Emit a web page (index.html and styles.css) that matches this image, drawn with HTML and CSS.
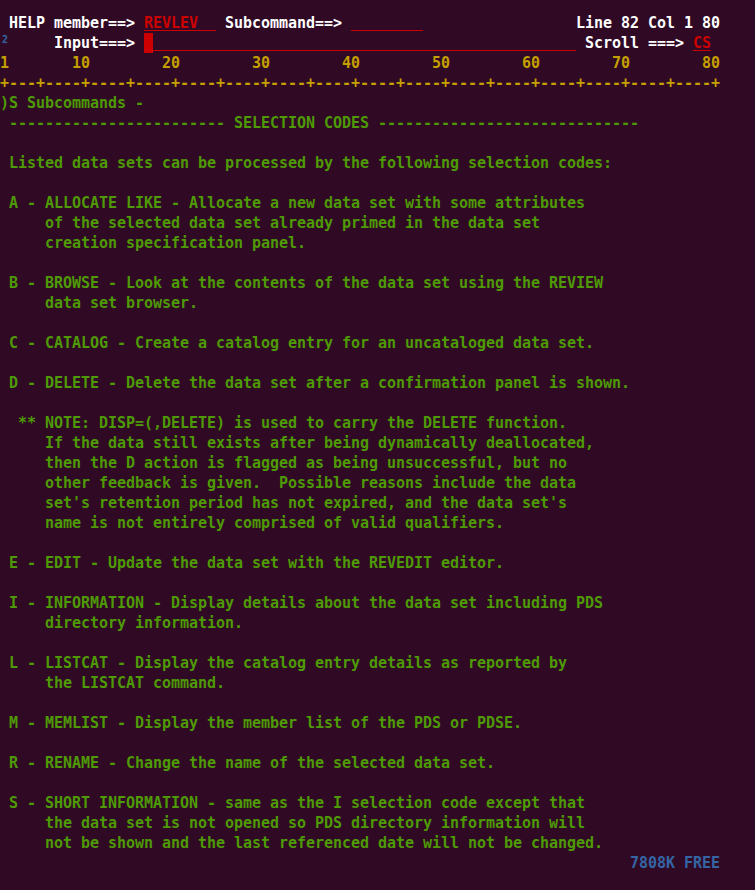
FILE: index.html
```html
<!DOCTYPE html>
<html>
<head>
<meta charset="utf-8">
<title>REVIEW HELP</title>
<link rel="stylesheet" href="styles.css">
</head>
<body>
<main class="screen">
<div class="row"> <span class="hi">HELP member==&gt; </span><span class="field red">REVLEV  </span><span class="hi"> Subcommand==&gt; </span><span class="field red">        </span><span class="hi">                 Line 82 Col 1 80</span></div>
<div class="row"><span class="tag">2</span><span class="hi">     Input===&gt; </span><span class="cursor"> </span><span class="field red">                                               </span><span class="hi"> Scroll ===&gt; </span><span class="field red">CS</span></div>
<div class="row yellow">1       10        20        30        40        50        60        70        80</div>
<div class="row yellow">+---+----+----+----+----+----+----+----+----+----+----+----+----+----+----+----+</div>
<div class="row green">)S Subcommands -</div>
<div class="row green"> ------------------------ SELECTION CODES -----------------------------</div>
<div class="row green"> </div>
<div class="row green"> Listed data sets can be processed by the following selection codes:</div>
<div class="row green"> </div>
<div class="row green"> A - ALLOCATE LIKE - Allocate a new data set with some attributes</div>
<div class="row green">     of the selected data set already primed in the data set</div>
<div class="row green">     creation specification panel.</div>
<div class="row green"> </div>
<div class="row green"> B - BROWSE - Look at the contents of the data set using the REVIEW</div>
<div class="row green">     data set browser.</div>
<div class="row green"> </div>
<div class="row green"> C - CATALOG - Create a catalog entry for an uncataloged data set.</div>
<div class="row green"> </div>
<div class="row green"> D - DELETE - Delete the data set after a confirmation panel is shown.</div>
<div class="row green"> </div>
<div class="row green">  ** NOTE: DISP=(,DELETE) is used to carry the DELETE function.</div>
<div class="row green">     If the data still exists after being dynamically deallocated,</div>
<div class="row green">     then the D action is flagged as being unsuccessful, but no</div>
<div class="row green">     other feedback is given.  Possible reasons include the data</div>
<div class="row green">     set's retention period has not expired, and the data set's</div>
<div class="row green">     name is not entirely comprised of valid qualifiers.</div>
<div class="row green"> </div>
<div class="row green"> E - EDIT - Update the data set with the REVEDIT editor.</div>
<div class="row green"> </div>
<div class="row green"> I - INFORMATION - Display details about the data set including PDS</div>
<div class="row green">     directory information.</div>
<div class="row green"> </div>
<div class="row green"> L - LISTCAT - Display the catalog entry details as reported by</div>
<div class="row green">     the LISTCAT command.</div>
<div class="row green"> </div>
<div class="row green"> M - MEMLIST - Display the member list of the PDS or PDSE.</div>
<div class="row green"> </div>
<div class="row green"> R - RENAME - Change the name of the selected data set.</div>
<div class="row green"> </div>
<div class="row green"> S - SHORT INFORMATION - same as the I selection code except that</div>
<div class="row green">     the data set is not opened so PDS directory information will</div>
<div class="row green">     not be shown and the last referenced date will not be changed.</div>
<div class="row blue">                                                                      7808K FREE</div>
</main>
</body>
</html>
```

FILE: styles.css
```css
html, body {
  margin: 0;
  padding: 0;
  background: #300a24;
  height: 100%;
}

.screen {
  padding-top: 12px;
  font-family: "DejaVu Sans Mono", "Liberation Mono", monospace;
  font-size: 15px;
  font-weight: bold;
  letter-spacing: -0.03px;
  color: #4e9a06;
}

.row {
  height: 19px;
  padding-top: 1px;
  line-height: 20px;
  white-space: pre;
}

.hi { color: #ffffff; }
.red { color: #cc0000; }
.yellow { color: #c4a000; }
.green { color: #4e9a06; }
.blue { color: #3465a4; }

.field {
  display: inline-block;
  height: 17px;
  line-height: 20px;
  vertical-align: top;
  border-bottom: 1px solid #cc0000;
}

.cursor {
  display: inline-block;
  height: 20px;
  vertical-align: top;
  background: #cc0000;
}

.tag {
  display: inline-block;
  width: 9px;
  height: 19px;
  vertical-align: top;
  color: #3465a4;
  font-size: 10px;
  line-height: 14px;
  padding-left: 2px;
  box-sizing: border-box;
  letter-spacing: 0;
}
```
